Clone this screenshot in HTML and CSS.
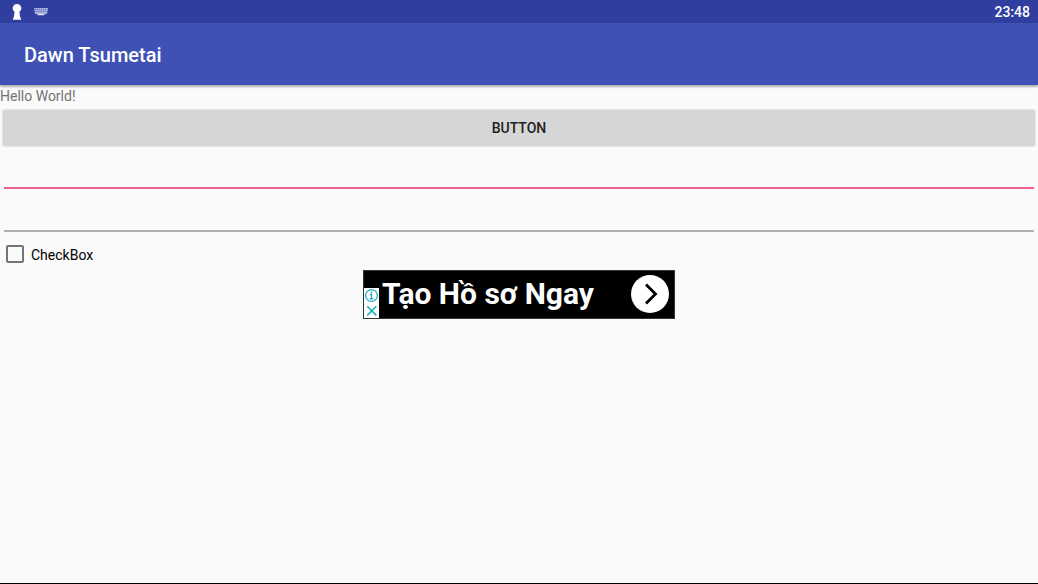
FILE: index.html
```html
<!DOCTYPE html>
<html lang="en">
<head>
  <meta charset="UTF-8" />
  <meta name="viewport" content="width=device-width, initial-scale=1.0" />
  <title>Dawn Tsumetai</title>
  <link rel="stylesheet" href="styles.css">
</head>
<body>
  <div class="status-bar">
    <svg class="keyhole" viewBox="0 0 10 16" aria-hidden="true">
      <path d="M5 0a4.300 4.300 0 0 0-2.500 7.800Q2.500 12 .8 15.800h8.400Q7.500 12 7.500 7.800A4.300 4.300 0 0 0 5 0z" fill="#fff" />
    </svg>
    <svg class="keyboard" viewBox="0 0 14 8" aria-hidden="true">
      <path d="M0 0h14l-1 6H1z" fill="#a3abdc" />
      <path d="M1 1.500h12M1.500 3.500h11" stroke="#5c68b5" stroke-dasharray="1 1" fill="none" />
      <path d="M3.500 6.500h7" stroke="#dfe2f5" stroke-width="1.500" />
    </svg>
    <span class="clock">23:48</span>
  </div>

  <header class="toolbar">
    <h1>Dawn Tsumetai</h1>
  </header>

  <main>
    <p class="hello">Hello World!</p>
    <button type="button" class="btn">BUTTON</button>
    <input type="text" class="field active" aria-label="First text" />
    <input type="text" class="field" aria-label="Second text" />
    <div class="check-row">
      <input type="checkbox" id="check" />
      <label for="check">CheckBox</label>
    </div>

    <div class="ad">
      <a class="ad-link" href="#" lang="vi">
        <span class="ad-text">Tạo Hồ sơ Ngay</span>
        <svg class="ad-arrow" viewBox="0 0 38 38" aria-hidden="true">
          <circle cx="19" cy="19" r="19" fill="#fff" />
          <path d="M15 9.500l9.500 9.500-9.500 9.500" fill="none" stroke="#000" stroke-width="2.800" />
        </svg>
      </a>
      <div class="ad-choices">
        <svg viewBox="0 0 14 14" aria-hidden="true">
          <circle cx="7" cy="7" r="5.500" fill="none" stroke="#20aebd" stroke-width="1.200" />
          <path d="M7 3.300v1.500M5.500 6H7v4M5.200 10h3.600" fill="none" stroke="#20aebd" stroke-width="1.300" />
        </svg>
        <svg viewBox="0 0 14 14" aria-hidden="true">
          <path d="M3 3l8.500 8.500M11.500 3L3 11.500" stroke="#20aebd" stroke-width="1.500" />
        </svg>
      </div>
    </div>
  </main>
</body>
</html>
```

FILE: styles.css
```css
* {
  box-sizing: border-box;
}

body {
  display: flex;
  flex-direction: column;
  min-height: 100vh;
  margin: 0;
  background: #fafafa;
  border-bottom: 1px solid #000;
  color: #000;
  font-family: Roboto, "Liberation Sans", sans-serif;
  font-size: 14px;
}

.status-bar {
  display: flex;
  align-items: center;
  height: 23px;
  padding: 0 8px 0 12px;
  background: #303f9f;
  color: #fff;
}

.keyhole {
  width: 10px;
  height: 16px;
}

.keyboard {
  width: 14px;
  height: 8px;
  margin-left: 12px;
}

.clock {
  margin-left: auto;
  padding-top: 1px;
  font-weight: 500;
}

.toolbar {
  display: flex;
  align-items: center;
  height: 62px;
  padding: 2px 24px 0;
  background: #3f51b5;
  box-shadow: 0 2px 2px rgba(0, 0, 0, 0.3);
  color: #fff;
}

h1 {
  margin: 0;
  font-size: 20px;
  font-weight: 500;
}

main {
  display: flex;
  flex-direction: column;
}

.hello {
  margin: 2px 0 4px;
  color: #737373;
  line-height: 19px;
}

.btn {
  height: 36px;
  margin: 0 3px;
  border: none;
  border-radius: 2px;
  background: #d6d6d6;
  box-shadow: 0 0 2px rgba(0, 0, 0, 0.3);
  color: #212121;
  font: inherit;
  font-weight: 500;
  cursor: pointer;
}

.field {
  height: 36px;
  margin: 7px 4px 0;
  padding: 0;
  border: none;
  border-bottom: 2px solid #b0b0b0;
  background: transparent;
  font: inherit;
  outline: none;
}

.field.active {
  border-bottom-color: #ed5f8d;
}

.check-row {
  display: flex;
  align-items: center;
  gap: 7px;
  height: 32px;
  margin-top: 6px;
  padding-left: 6px;
}

.check-row input {
  appearance: none;
  width: 18px;
  height: 18px;
  margin: 0;
  border: 2px solid #757575;
  border-radius: 2px;
}

.check-row input:checked {
  background: #ff4081;
}

.check-row label {
  padding-top: 1px;
}

.ad {
  position: relative;
  align-self: center;
  width: 312px;
  height: 49px;
  border: 1px solid #333;
  background: #000;
}

.ad-link {
  display: flex;
  align-items: center;
  justify-content: space-between;
  height: 100%;
  padding: 0 5px 2px 18px;
  color: #fff;
  text-decoration: none;
}

.ad-text {
  font-size: 30px;
  font-weight: 700;
}

.ad-arrow {
  width: 38px;
  height: 38px;
}

/* info and close marks sit over the corner of the banner */
.ad-choices {
  position: absolute;
  bottom: 0;
  left: 0;
  display: flex;
  flex-direction: column;
  width: 15px;
  background: #fff;
}

.ad-choices svg {
  height: 15px;
}
```
